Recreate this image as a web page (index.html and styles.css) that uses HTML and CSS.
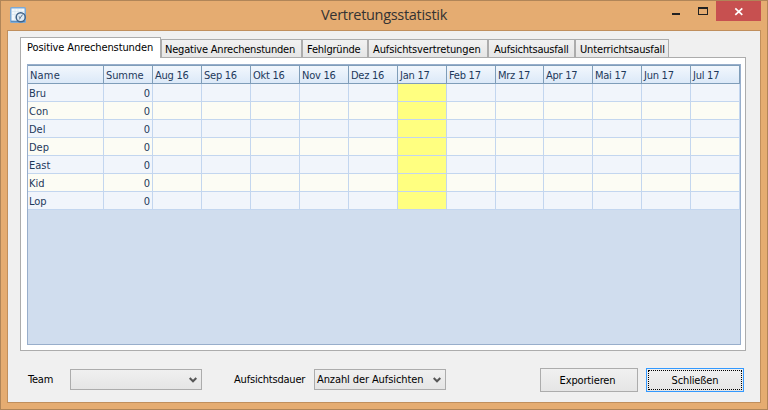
FILE: index.html
```
<!DOCTYPE html>
<html lang="de">
<head>
<meta charset="utf-8">
<title>Vertretungsstatistik</title>
<link rel="stylesheet" href="styles.css">
</head>
<body>
<div class="window">
  <header class="titlebar">
    <svg class="app-icon" width="16" height="16" viewBox="0 0 16 16">
      <rect x="0" y="0" width="16" height="16" rx="1.5" fill="#7ba9d6"/>
      <rect x="1.5" y="1.5" width="13" height="12" fill="#f4f8fb"/>
      <path d="M2 4.5H14M5 2V14M8 2V14M11 2V14M2 7.5H14" stroke="#d5e2ee" stroke-width=".6"/>
      <path d="M1 14.5H15" stroke="#5d8dbc"/>
      <circle cx="10.7" cy="10.2" r="4.5" fill="#dfeaf4" stroke="#3f6288" stroke-width="1.5"/>
      <path d="M12.6 7.5L10.4 10.6L8.8 9.8M10.4 10.6L9.4 12.4" fill="none" stroke="#47617d" stroke-width=".9"/>
    </svg>
    <h1 class="title">Vertretungsstatistik</h1>
    <div class="controls">
      <svg width="93" height="20" viewBox="0 0 93 20" shape-rendering="crispEdges">
        <rect x="48" width="45" height="20" fill="#c75050"/>
        <rect x="4" y="12" width="8" height="2" fill="#222"/>
        <path d="M30 6h10v8H30z M31 8v5h8V8z" fill="#222" fill-rule="evenodd"/>
        <path d="M67.3 7.3l7 6.5M74.3 7.3l-7 6.5" stroke="#fff" stroke-width="1.7" shape-rendering="auto"/>
      </svg>
    </div>
  </header>
  <main class="client">
    <nav class="tabs">
      <div class="tab t1 active"><span>Positive Anrechenstunden</span></div>
      <div class="tab t2"><span>Negative Anrechenstunden</span></div>
      <div class="tab t3"><span>Fehlgründe</span></div>
      <div class="tab t4"><span>Aufsichtsvertretungen</span></div>
      <div class="tab t5"><span>Aufsichtsausfall</span></div>
      <div class="tab t6"><span>Unterrichtsausfall</span></div>
    </nav>
    <section class="panel">
      <div class="grid-box">
        <table class="grid">
          <colgroup><col class="c-name"><col span="8" class="c"><col class="c-mrz"><col span="4" class="c"></colgroup>
          <thead><tr><th class="name">Name</th><th class="name">Summe</th><th>Aug 16</th><th>Sep 16</th><th>Okt 16</th><th>Nov 16</th><th>Dez 16</th><th>Jan 17</th><th>Feb 17</th><th>Mrz 17</th><th>Apr 17</th><th>Mai 17</th><th>Jun 17</th><th>Jul 17</th></tr></thead>
          <tbody>
            <tr><td>Bru</td><td>0</td><td></td><td></td><td></td><td></td><td></td><td class="now"></td><td></td><td></td><td></td><td></td><td></td><td></td></tr>
            <tr><td>Con</td><td>0</td><td></td><td></td><td></td><td></td><td></td><td class="now"></td><td></td><td></td><td></td><td></td><td></td><td></td></tr>
            <tr><td>Del</td><td>0</td><td></td><td></td><td></td><td></td><td></td><td class="now"></td><td></td><td></td><td></td><td></td><td></td><td></td></tr>
            <tr><td>Dep</td><td>0</td><td></td><td></td><td></td><td></td><td></td><td class="now"></td><td></td><td></td><td></td><td></td><td></td><td></td></tr>
            <tr><td>East</td><td>0</td><td></td><td></td><td></td><td></td><td></td><td class="now"></td><td></td><td></td><td></td><td></td><td></td><td></td></tr>
            <tr><td>Kid</td><td>0</td><td></td><td></td><td></td><td></td><td></td><td class="now"></td><td></td><td></td><td></td><td></td><td></td><td></td></tr>
            <tr><td>Lop</td><td>0</td><td></td><td></td><td></td><td></td><td></td><td class="now"></td><td></td><td></td><td></td><td></td><td></td><td></td></tr>
          </tbody>
        </table>
      </div>
    </section>
    <footer class="bar">
      <label class="lbl-team">Team</label>
      <div class="combo combo-team"><span></span><svg width="8" height="6" viewBox="0 0 8 6"><path d="M.7 1L4 4.3L7.3 1" fill="none" stroke="#555" stroke-width="2"/></svg></div>
      <label class="lbl-dauer">Aufsichtsdauer</label>
      <div class="combo"><span>Anzahl der Aufsichten</span><svg width="8" height="6" viewBox="0 0 8 6"><path d="M.7 1L4 4.3L7.3 1" fill="none" stroke="#555" stroke-width="2"/></svg></div>
      <button class="btn export">Exportieren</button>
      <button class="btn primary"><span class="focus">Schließen</span></button>
    </footer>
  </main>
</div>
</body>
</html>
```
FILE: styles.css
```
* { box-sizing: border-box; }
body { margin: 0; font: 11px/13px "DejaVu Sans Condensed", "DejaVu Sans", sans-serif; font-stretch: condensed; color: #000; letter-spacing: -0.2px; }
.window { width: 768px; height: 410px; background: #e5ac71; border: 1px solid #b08558; padding: 0 6px 6px; display: flex; flex-direction: column; }
.titlebar { height: 29px; flex: none; display: grid; grid-template-columns: 93px 1fr 93px; }
.app-icon { margin: 6px 0 0 3px; }
.title { margin: 4px 0 0; text-align: center; font: 14.5px/20px "Open Sans", "Noto Sans", sans-serif; color: #333; letter-spacing: -0.3px; }
.controls { height: 20px; }
.controls svg { display: block; }
.client { flex: 1; background: #f0f0f0; border: 1px solid #c08f5d; padding: 6px 14px 0 12px; }
.tabs { display: flex; align-items: flex-end; height: 20px; }
.tab { height: 18px; padding: 3px 0 0 3px; border: 1px solid #acacac; border-bottom: 0; background: linear-gradient(#f1f1f1, #e6e6e6); white-space: nowrap; }
.tab.active { height: 21px; margin-bottom: -1px; background: #fff; padding: 3px 0 0 6px; position: relative; letter-spacing: -0.1px; }
.t1 { width: 141px; }
.t2 { width: 141px; }
.t3 { width: 66px; padding-left: 4px; }
.t4 { width: 120px; padding-left: 4px; letter-spacing: -0.12px; }
.t5 { width: 87px; padding-left: 5px; }
.t6 { width: 94px; padding-left: 4px; letter-spacing: -0.15px; }
.panel { height: 294px; border: 1px solid #acacac; background: #fff; padding: 6px 4px 5px 6px; }
.grid-box { height: 281px; width: 714px; border: 1px solid #98aecb; background: #d0ddee; }
.grid { border-collapse: separate; border-spacing: 0; table-layout: fixed; width: 712px; color: #1e395b; }
.c-name { width: 76px; }
.c { width: 49px; }
.c-mrz { width: 48px; }
.grid th { height: 19px; padding: 2px 0 0 2px; font-weight: normal; text-align: left; border: 0 solid #7f9db9; border-width: 1px 1px 1px 0; background: linear-gradient(#f2f7fd, #dce9f8); white-space: nowrap; letter-spacing: -0.25px; }
.grid th.name { letter-spacing: -0.1px; }
.grid th.name:first-child { letter-spacing: 0.2px; }
.grid td { height: 18px; padding: 2px 0 0 1px; border: 0 solid #c3d6ef; border-width: 0 1px 1px 0; background: #f1f5fb; letter-spacing: 0; }
.grid tr:nth-child(even) td { background: #fcfcf4; }
.grid td:nth-child(2) { text-align: right; padding-right: 2px; }
.grid tbody td.now { background: #ffff80; }
.bar { display: flex; margin-top: 17px; padding-left: 8px; height: 24px; }
.bar label { line-height: 13px; padding-top: 5px; white-space: nowrap; }
.lbl-team { width: 42px; }
.lbl-dauer { width: 80px; margin-left: 32px; }
.combo { width: 132px; height: 21px; margin-top: 1px; border: 1px solid #acacac; background: linear-gradient(#f0f0f0, #e5e5e5); display: flex; justify-content: space-between; align-items: center; padding: 0 4px 0 2px; white-space: nowrap; letter-spacing: -0.1px; }
.btn { font: inherit; letter-spacing: -0.15px; color: #000; height: 24px; width: 98px; padding: 0 3px 0 0; border: 1px solid #acacac; background: linear-gradient(#f0f0f0, #e5e5e5); }
.export { margin-left: 94px; }
.primary { margin-left: 8px; border-color: #3399ff; padding: 1px; }
.focus { display: block; height: 20px; line-height: 19px; border: 1px dotted #000; }
```
